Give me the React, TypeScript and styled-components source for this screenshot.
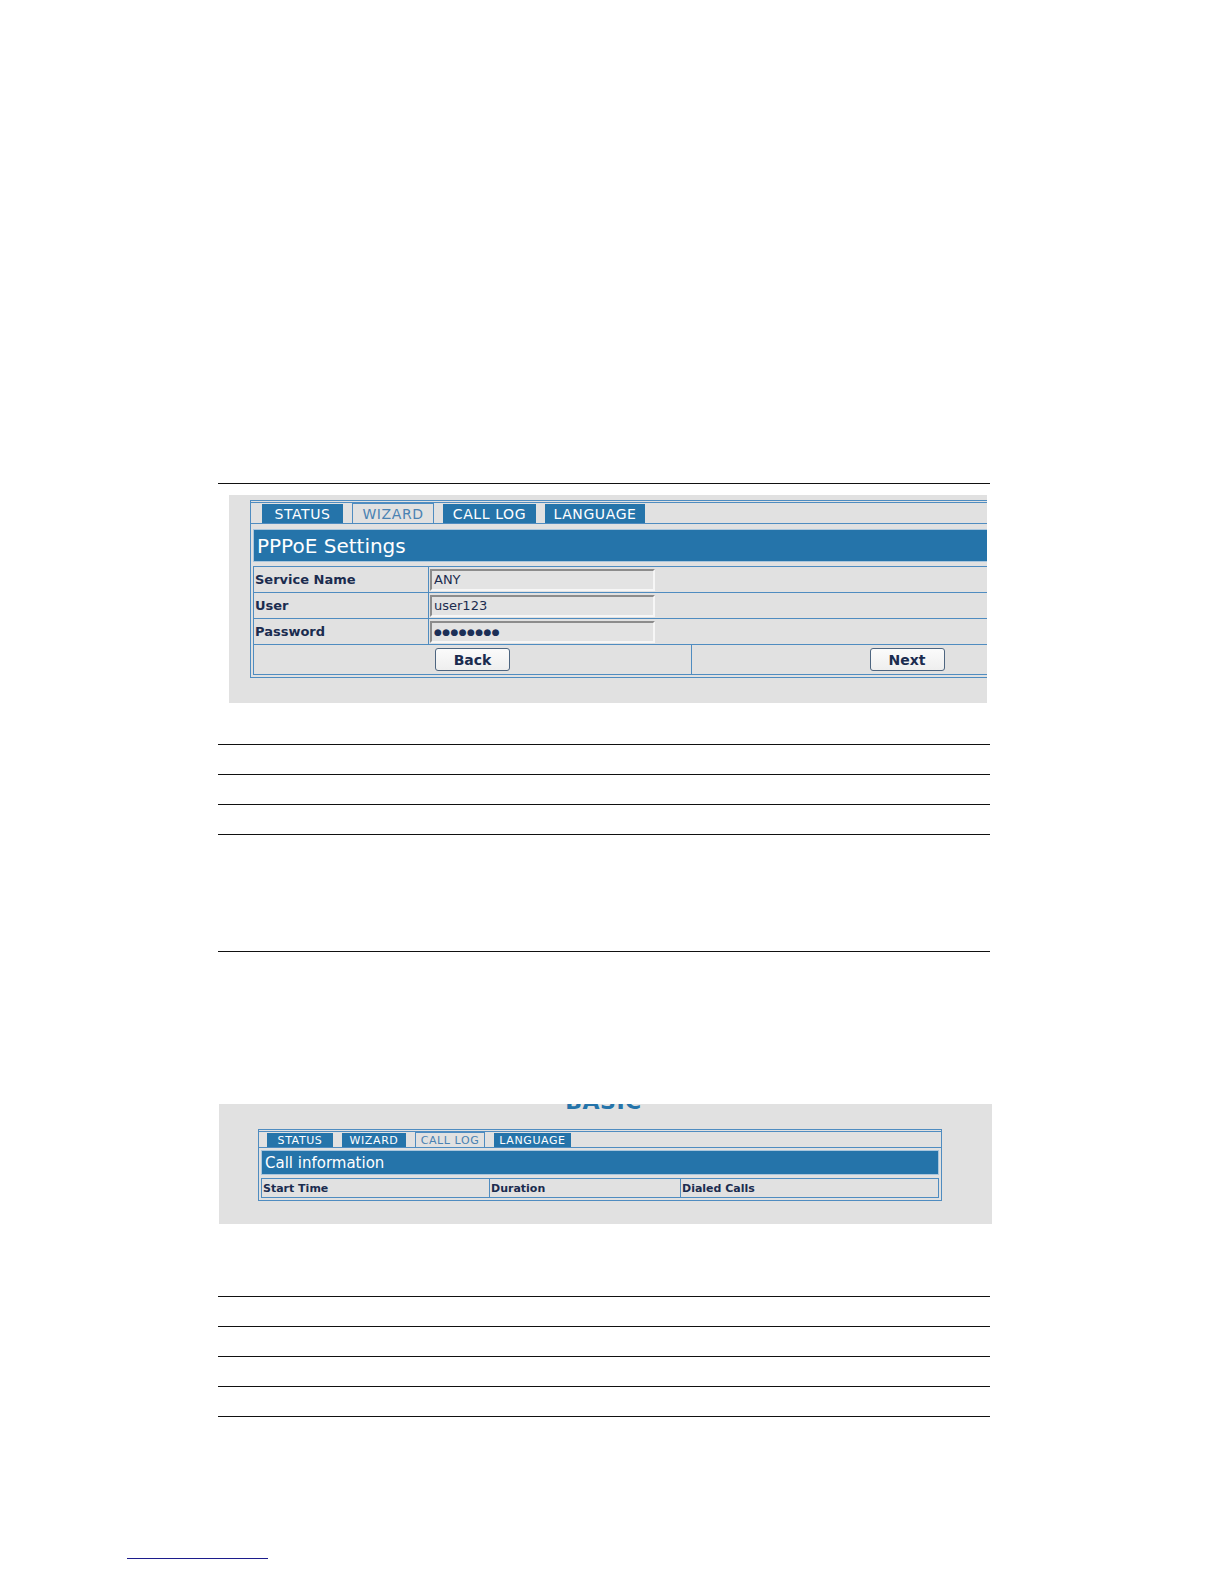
import styled, { createGlobalStyle } from 'styled-components';

const GlobalStyle = createGlobalStyle`
  html, body {
    margin: 0;
    padding: 0;
    background: #ffffff;
  }
  body {
    font-family: "DejaVu Sans", Verdana, sans-serif;
  }
`;

const BLUE = '#2574aa';
const LINE = '#4f8cc0';
const GREY = '#e1e1e1';
const NAVY = '#1b2c4f';

const Page = styled.div`
  width: 1224px;
  min-height: 1584px;
  display: flex;
  flex-direction: column;
`;

const Column = styled.div`
  margin-left: 218px;
  width: 772px;
  padding-top: 483px;
  display: flex;
  flex-direction: column;
`;

const Rule = styled.div<{ $gap?: number }>`
  margin-top: ${(p) => p.$gap ?? 0}px;
  border-top: 1px solid #111;
  height: 0;
`;

const Footnote = styled.div`
  margin-left: 127px;
  margin-top: 141px;
  width: 141px;
  border-top: 1px solid #1c1c8c;
`;

const Shot = styled.div<{ $ml: number; $mt: number; $w: number; $h: number; $pl: number; $pt: number }>`
  margin-left: ${(p) => p.$ml}px;
  margin-top: ${(p) => p.$mt}px;
  width: ${(p) => p.$w}px;
  height: ${(p) => p.$h}px;
  box-sizing: border-box;
  padding: ${(p) => p.$pt}px 0 0 ${(p) => p.$pl}px;
  background: ${GREY};
  overflow: hidden;
`;

// the screenshot is cropped through the page title, so only its lower half shows
const Clipped = styled.div`
  height: 25px;
  margin-left: -39px;
  width: 773px;
  overflow: hidden;
  display: flex;
  justify-content: center;
`;

const BigTitle = styled.div`
  margin-top: -13px;
  padding-right: 4px;
  font-size: 22px;
  line-height: 22px;
  font-weight: bold;
  color: ${BLUE};
  letter-spacing: 0.5px;
`;

const Frame = styled.div<{ $w: number }>`
  width: ${(p) => p.$w}px;
  flex-shrink: 0;
  box-sizing: border-box;
  border: 1px solid ${LINE};
  padding: 1px 2px 2px 2px;
  background: ${GREY};
`;

const TabBar = styled.div<{ $h: number; $pl: number }>`
  height: ${(p) => p.$h}px;
  box-sizing: border-box;
  display: flex;
  align-items: stretch;
  gap: 9px;
  padding-left: ${(p) => p.$pl}px;
  border-top: 1px solid ${LINE};
  border-bottom: 1px solid ${LINE};
  margin: 0 -2px;
`;

const Tab = styled.div<{ $w: number; $fs: number; $active?: boolean }>`
  width: ${(p) => p.$w}px;
  box-sizing: border-box;
  display: flex;
  align-items: center;
  justify-content: center;
  font-size: ${(p) => p.$fs}px;
  letter-spacing: 0.6px;
  text-transform: uppercase;
  background: ${(p) => (p.$active ? GREY : BLUE)};
  color: ${(p) => (p.$active ? '#4a82b2' : '#ffffff')};
  border: 1px solid ${(p) => (p.$active ? LINE : BLUE)};
  border-bottom: none;
  margin-top: ${(p) => (p.$active ? '0' : '1px')};
`;

const Heading = styled.div<{ $h: number; $fs: number; $mt: number }>`
  margin-top: ${(p) => p.$mt}px;
  height: ${(p) => p.$h}px;
  box-sizing: border-box;
  display: flex;
  align-items: center;
  padding-left: 3px;
  background: ${BLUE};
  border: 1px solid #a9c6dd;
  color: #ffffff;
  font-size: ${(p) => p.$fs}px;
`;

const Table = styled.div<{ $mt: number }>`
  margin-top: ${(p) => p.$mt}px;
  border: 1px solid ${LINE};
  display: flex;
  flex-direction: column;
`;

const Row = styled.div<{ $cols: string; $h: number }>`
  display: grid;
  grid-template-columns: ${(p) => p.$cols};
  height: ${(p) => p.$h}px;
  & + & {
    border-top: 1px solid ${LINE};
  }
`;

const Cell = styled.div<{ $center?: boolean }>`
  display: flex;
  align-items: center;
  justify-content: ${(p) => (p.$center ? 'center' : 'flex-start')};
  & + & {
    border-left: 1px solid ${LINE};
  }
`;

const Label = styled.span<{ $fs: number }>`
  padding-left: 1px;
  font-size: ${(p) => p.$fs}px;
  font-weight: bold;
  color: ${NAVY};
`;

const Field = styled.div`
  margin-left: 1px;
  width: 225px;
  height: 22px;
  box-sizing: border-box;
  display: flex;
  align-items: center;
  padding-left: 2px;
  border-top: 2px solid #8c8c8c;
  border-left: 2px solid #8c8c8c;
  border-bottom: 2px solid #f6f6f6;
  border-right: 2px solid #f6f6f6;
  background: #e3e3e3;
  font-size: 13px;
  color: ${NAVY};
`;

const Dots = styled.span`
  font-size: 9px;
  letter-spacing: 0.4px;
  color: #1c2f57;
`;

const Button = styled.button`
  width: 75px;
  height: 23px;
  padding: 0;
  font-family: "DejaVu Sans", Verdana, sans-serif;
  font-size: 14px;
  font-weight: bold;
  color: ${NAVY};
  background: linear-gradient(#fbfbfb, #eeeeee);
  border: 1px solid #4d6580;
  border-radius: 3px;
`;

const fields = [
  { label: 'Service Name', value: 'ANY' },
  { label: 'User', value: 'user123' },
  { label: 'Password', value: '' },
];

function App() {
  return (
    <Page>
      <GlobalStyle />
      <Column>
        <Rule />
        <Shot $ml={11} $mt={11} $w={758} $h={208} $pl={21} $pt={5}>
          <Frame $w={876}>
            <TabBar $h={22} $pl={11}>
              <Tab $w={81} $fs={14}>Status</Tab>
              <Tab $w={82} $fs={14} $active>Wizard</Tab>
              <Tab $w={93} $fs={14}>Call Log</Tab>
              <Tab $w={100} $fs={14}>Language</Tab>
            </TabBar>
            <Heading $h={33} $fs={20} $mt={5}>PPPoE Settings</Heading>
            <Table $mt={4}>
              {fields.map((f) => (
                <Row key={f.label} $cols="174px 1fr" $h={25}>
                  <Cell>
                    <Label $fs={13}>{f.label}</Label>
                  </Cell>
                  <Cell>
                    <Field>{f.value || <Dots>●●●●●●●●</Dots>}</Field>
                  </Cell>
                </Row>
              ))}
              <Row $cols="437px 1fr" $h={29}>
                <Cell $center>
                  <Button>Back</Button>
                </Cell>
                <Cell $center>
                  <Button>Next</Button>
                </Cell>
              </Row>
            </Table>
          </Frame>
        </Shot>
        <Rule $gap={41} />
        <Rule $gap={29} />
        <Rule $gap={29} />
        <Rule $gap={29} />
        <Rule $gap={116} />
        <Shot $ml={1} $mt={152} $w={773} $h={120} $pl={39} $pt={0}>
          <Clipped>
            <BigTitle>BASIC</BigTitle>
          </Clipped>
          <Frame $w={684}>
            <TabBar $h={17} $pl={8}>
              <Tab $w={66} $fs={11}>Status</Tab>
              <Tab $w={64} $fs={11}>Wizard</Tab>
              <Tab $w={70} $fs={11} $active>Call Log</Tab>
              <Tab $w={77} $fs={11}>Language</Tab>
            </TabBar>
            <Heading $h={25} $fs={15} $mt={2}>Call information</Heading>
            <Table $mt={3}>
              <Row $cols="227px 191px 1fr" $h={18}>
                <Cell>
                  <Label $fs={11}>Start Time</Label>
                </Cell>
                <Cell>
                  <Label $fs={11}>Duration</Label>
                </Cell>
                <Cell>
                  <Label $fs={11}>Dialed Calls</Label>
                </Cell>
              </Row>
            </Table>
          </Frame>
        </Shot>
        <Rule $gap={72} />
        <Rule $gap={29} />
        <Rule $gap={29} />
        <Rule $gap={29} />
        <Rule $gap={29} />
      </Column>
      <Footnote />
    </Page>
  );
}

export default App;
